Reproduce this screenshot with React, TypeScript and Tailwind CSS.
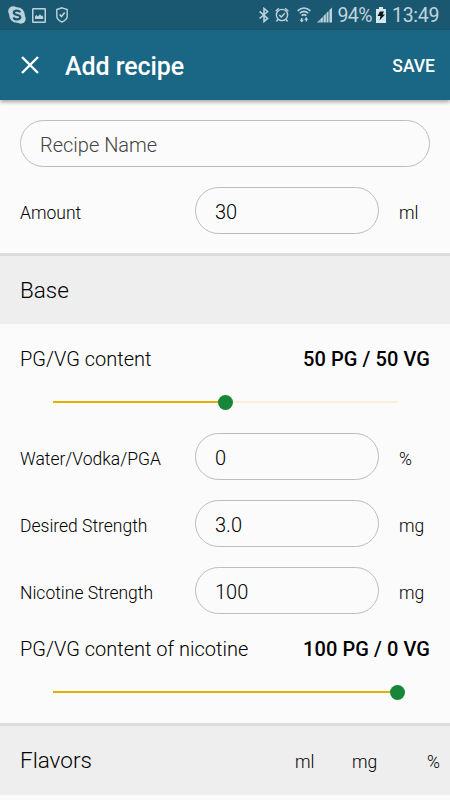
import React from "react";

function StatusBar() {
  return (
    <div className="flex h-[30px] items-center bg-[#195870] text-[#c0d5dd]">
      <svg className="ml-2 h-[18px] w-[18px]" viewBox="0 0 18 18">
        <g fill="#bdd3dc">
          <circle cx="5.2" cy="5.2" r="5" />
          <circle cx="12.7" cy="12.8" r="5" />
          <circle cx="9" cy="9" r="7.8" />
        </g>
        <path d="M12.2 6.4C11.7 5 10.4 4.6 9 4.6c-1.800 0-3.200.7-3.200 2.200 0 3 6.500 1.400 6.500 4.300 0 1.500-1.500 2.300-3.300 2.300-1.700 0-3-.6-3.500-2.100" fill="none" stroke="#195870" strokeWidth="2.200" />
      </svg>
      <svg className="ml-[6px] h-[15px] w-[14px]" viewBox="0 0 14 15">
        <rect x=".75" y=".75" width="12.500" height="13.500" rx=".6" fill="none" stroke="#bdd3dc" strokeWidth="1.500" />
        <path d="M3 11V8.500L4.500 7l1.400 1.400L8 6.200l1.300 1.700L10 7.300l1.200 1.500V11z" fill="#bdd3dc" />
      </svg>
      <svg className="ml-[10px] h-[16px] w-[12px]" viewBox="0 0 12 16" fill="none" stroke="#bdd3dc" strokeWidth="1.400">
        <path d="M6 .8 11.200 2.600V9.500c0 2.500-2.300 4.200-5.200 5.600C3.100 13.700.8 12 .8 9.500V2.600z" />
        <path d="m3.600 7.500 1.900 2L8.700 5.400" strokeWidth="1.600" />
      </svg>
      <svg className="ml-[191px] h-[16px] w-[10px]" viewBox="0 0 10 16" fill="none" stroke="#bdd3dc" strokeWidth="1.600">
        <path d="m.6 4.400 8 7L5 14.500v-13l3.600 3-8 7" />
      </svg>
      <svg className="ml-[6px] h-[16px] w-[14px]" viewBox="0 0 14 16" fill="none" stroke="#bdd3dc" strokeWidth="1.400">
        <circle cx="7" cy="8" r="5.600" />
        <path d="M.7 4.200 3.800 1.300M13.300 4.200l-3.100-2.900M2.800 12.500l-1.300 2M11.200 12.500l1.300 2M4.300 8l2 2 3.500-3.700" />
      </svg>
      <svg className="ml-[8px] h-[16px] w-[14px]" viewBox="0 0 14 16" fill="none" stroke="#bdd3dc" strokeWidth="1.500">
        <path d="M.6 3.900Q7-1.800 13.400 3.900M2.700 6.300Q7 2.400 11.300 6.300M4.700 8.700Q7 6.500 9.300 8.700" />
        <path d="M4.700 15v-4M9.300 10.500v4" />
        <path d="m2.600 12.700 2.100 2.500 2.100-2.500zM7.200 12.800l2.100-2.300 2.100 2.300z" fill="#bdd3dc" stroke="none" />
      </svg>
      <svg className="ml-[6px] h-[16px] w-[15px]" viewBox="0 0 15 16" fill="#bdd3dc">
        <path d="M0 15.500 2.800 12.700v2.800zM3.300 12.200 5.800 9.700v5.800H3.300zM6.500 9l2.300-2.300v8.800H6.500zM9.500 6l2-2v11.500h-2zM12.400 3.100 15 .5v15h-2.600z" />
      </svg>
      <span className="ml-[5.5px] w-[36.500px] whitespace-nowrap pt-[1px] text-[19.5px] leading-[30px] tracking-[-0.6px]">94%</span>
      <svg className="ml-[2px] h-[16px] w-[10px]" viewBox="0 0 10 16">
        <path d="M3 0h4v2h3v14H0V2h3z" fill="#d5e8ee" />
        <path d="M4 4.500h4L6.500 7.500H9l-5.500 6 1-4.500H1.500z" fill="#091820" />
      </svg>
      <span className="ml-[6px] whitespace-nowrap pt-[1px] text-[19.5px] leading-[30px] tracking-[-0.3px]">13:49</span>
    </div>
  );
}

function AppBar() {
  return (
    <header className="relative flex h-[70px] items-center bg-[#196785] text-white shadow-[0_2px_4px_rgba(0,0,0,0.35)]">
      <svg className="ml-[21px] h-[18px] w-[18px]" viewBox="0 0 18 18" fill="none" stroke="white" strokeWidth="2.400">
        <path d="m1 1 16 16M17 1 1 17" />
      </svg>
      <h1 className="ml-[26px] mt-[3px] text-[25px] leading-[30px] font-medium tracking-[-0.08px]">Add recipe</h1>
      <button className="mr-[15px] ml-auto mt-[1px] text-[17.5px] leading-5 font-medium">SAVE</button>
    </header>
  );
}

function FieldRow({ label, value, unit }: { label: string; value: string; unit: string }) {
  return (
    <div className="flex h-[47px] items-center pl-5">
      <span className="w-[175px] pt-[5px] text-[17.5px]">{label}</span>
      <div className="flex h-[47px] w-[184px] items-center rounded-full border border-[#bdbdbd] pl-[19px] pt-[2px] text-[20px]">{value}</div>
      <span className="ml-5 pt-[5px] text-[17.5px]">{unit}</span>
    </div>
  );
}

function RatioRow({ label, value }: { label: string; value: string }) {
  return (
    <div className="flex h-[30px] items-center justify-between px-5 pt-[1px] text-[20px]">
      <span>{label}</span>
      <span className="font-medium tracking-[0.08px]">{value}</span>
    </div>
  );
}

function Slider({ value }: { value: number }) {
  return (
    <div className="mr-[52.5px] ml-[52.5px] flex h-4 items-center">
      <div className="h-[2px] bg-[#e2b100]" style={{ width: `${value}%` }} />
      <div className="relative z-10 -mx-[7.5px] h-[15px] w-[15px] shrink-0 rounded-full bg-[#178636]" />
      <div className="h-[2px] flex-1 bg-[#f8f0d8]" />
    </div>
  );
}

export default function App() {
  return (
    <main className="h-[800px] w-[450px] overflow-hidden bg-[#fbfbfb] font-['Roboto',sans-serif] font-light text-black">
      <div className="font-normal"><StatusBar /></div>
      <AppBar />
      <div className="h-[153px] pt-[20px]">
        <div className="mx-5 mb-[20px] flex h-[47px] items-center rounded-full border border-[#bdbdbd] pl-[19px] pt-[2px] text-[20px] text-[#444]">Recipe Name</div>
        <FieldRow label="Amount" value="30" unit="ml" />
      </div>
      <section className="flex h-[71px] items-center border-t-[3px] border-[#dcdcdc] bg-[#eeeeee] px-5 pt-[1px] text-[22.5px]">Base</section>
      <div className="h-[399px] pt-[19px]">
        <RatioRow label="PG/VG content" value="50 PG / 50 VG" />
        <div className="mt-[21px] mb-[23px]"><Slider value={50} /></div>
        <div className="flex flex-col gap-5">
          <FieldRow label="Water/Vodka/PGA" value="0" unit="%" />
          <FieldRow label="Desired Strength" value="3.0" unit="mg" />
          <FieldRow label="Nicotine Strength" value="100" unit="mg" />
        </div>
        <div className="mt-[19px]"><RatioRow label="PG/VG content of nicotine" value="100 PG / 0 VG" /></div>
        <div className="mt-[21px]"><Slider value={100} /></div>
      </div>
      <section className="flex h-[72px] items-center border-t-[3px] border-[#dcdcdc] bg-[#eeeeee] pl-5 text-[17.5px]">
        <span className="w-[275px] text-[22.5px]">Flavors</span>
        <span className="w-[57px] pt-[3px]">ml</span>
        <span className="w-[75px] pt-[3px]">mg</span>
        <span className="pt-[3px]">%</span>
      </section>
    </main>
  );
}
